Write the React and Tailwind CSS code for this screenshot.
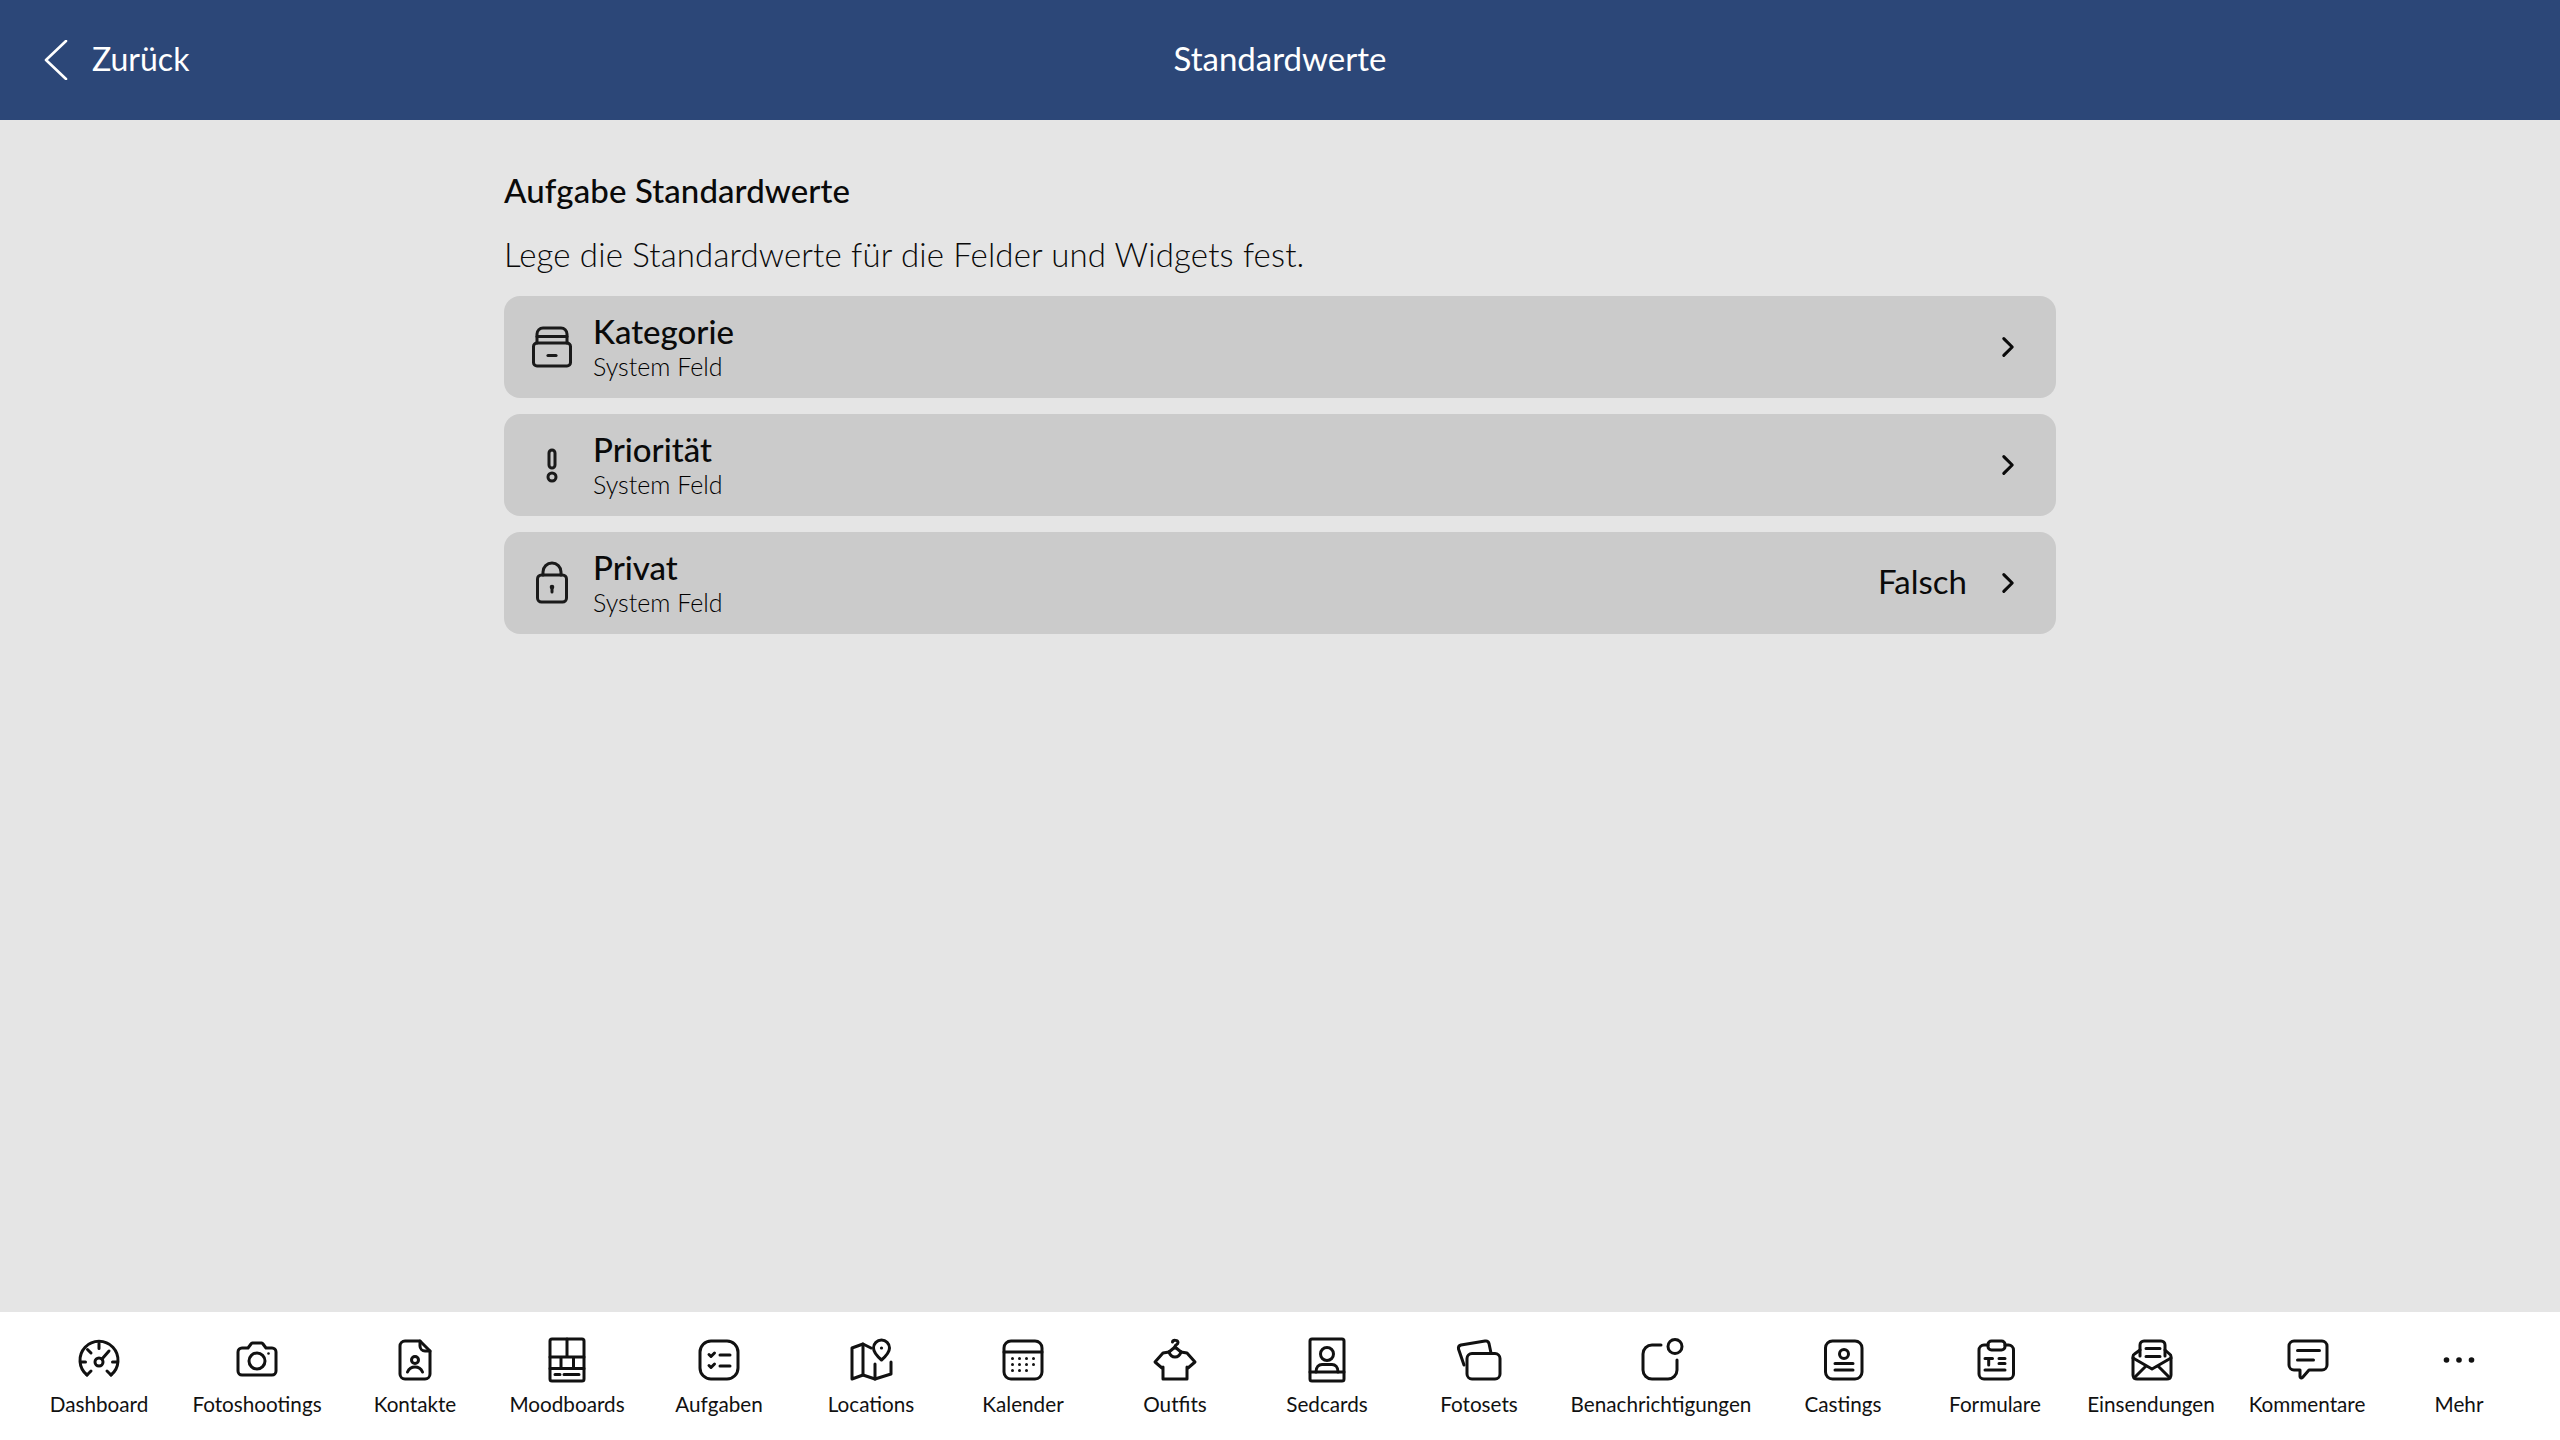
import { ChevronRight } from 'lucide-react';

const Icon = ({ children, className = 'w-12 h-12' }) => (
  <svg viewBox="0 0 48 48" fill="none" stroke="currentColor" strokeWidth="3" strokeLinecap="round" strokeLinejoin="round" className={className}>
    {children}
  </svg>
);

// --- ROW ICONS ---
const ArchiveIcon = () => (
  <Icon>
    <path d="M9 20v-9a6 6 0 0 1 6-6h18a6 6 0 0 1 6 6v9" />
    <path d="M9 13.500h30" />
    <rect x="5.500" y="20" width="37" height="23" rx="3.500" />
    <path d="M20 32.500h8" strokeWidth="3.200" />
  </Icon>
);

const ExclamationIcon = () => (
  <Icon>
    <rect x="21" y="9" width="6" height="18" rx="3" />
    <circle cx="24" cy="36" r="4" />
  </Icon>
);

const LockIcon = () => (
  <Icon>
    <rect x="9.500" y="16" width="29" height="27" rx="4" />
    <path d="M15 16v-3a9 9 0 0 1 18 0v3" />
    <circle cx="24" cy="28" r="2.300" fill="currentColor" stroke="none" />
    <path d="M24 29v4" />
  </Icon>
);

// --- TAB BAR ICONS ---
const tabIcons = {
  dashboard: (
    <>
      <path d="M12 39A19 19 0 1 1 36 39" />
      <path d="M12 39l4-4M36 39l-4-4M24 7.500v5M12.500 13.500l3.500 3.500M6 26h4.500M37.500 26H42" />
      <circle cx="24" cy="26" r="4" />
      <path d="M27 23l7-8" />
    </>
  ),
  camera: (
    <>
      <path d="M9 12h6l3-4a2 2 0 0 1 1.500-1h9a2 2 0 0 1 1.500 1l3 4h6a4 4 0 0 1 4 4v19a4 4 0 0 1-4 4H9a4 4 0 0 1-4-4V16a4 4 0 0 1 4-4z" />
      <circle cx="24" cy="25" r="8" />
      <circle cx="35.500" cy="17.500" r="1.300" fill="currentColor" stroke="none" />
    </>
  ),
  contact: (
    <>
      <path d="M29 5H14a5 5 0 0 0-5 5v28a5 5 0 0 0 5 5h20a5 5 0 0 0 5-5V15z" />
      <path d="M29 5v5a5 5 0 0 0 5 5h5" />
      <circle cx="24" cy="24" r="3.500" />
      <path d="M16.500 36c1.500-3.500 4-5 7.500-5s6 1.500 7.500 5" />
    </>
  ),
  moodboard: (
    <>
      <rect x="7" y="3" width="34" height="42" rx="2" />
      <path d="M24 3v18M7 21h34M7 32.500h34M18 21v11.500M30.500 21v11.500M12 38.500h5M21 38.500h15" />
    </>
  ),
  tasks: (
    <>
      <rect x="5" y="5" width="38" height="38" rx="11" />
      <path d="M14 18.500l2 2 3.500-3.500M14 29.500l2 2 3.500-3.500M25 19h10M25 30h10" />
    </>
  ),
  map: (
    <>
      <path d="M24 12l-8-4-11 4v31l11-4 12 4 16-5V26" />
      <path d="M16 8v31M28 28v15" />
      <path d="M34.500 4a8 8 0 0 0-8 8c0 5 8 12 8 12s8-7 8-12a8 8 0 0 0-8-8z" />
      <circle cx="34.500" cy="12" r="1.600" fill="currentColor" stroke="none" />
    </>
  ),
  calendar: (
    <>
      <rect x="5" y="5" width="38" height="38" rx="7" />
      <path d="M5 16h38" />
      <g fill="currentColor" stroke="none">
        {[13.500, 20.500, 27.500, 34.500].map((x) =>
          [22.500, 28.500, 34.500].map((y) => (x === 34.500 && y === 34.500 ? null : <circle key={`${x}-${y}`} cx={x} cy={y} r="1.500" />))
        )}
      </g>
    </>
  ),
  shirt: (
    <>
      <path d="M18 16l-6 1-8 9 7 6 1-1v12h24V31l1 1 7-6-8-9-6-1" />
      <path d="M18 16c1 3 3 5 6 5s5-2 6-5" />
      <path d="M24 11l-6 5M24 11l6 5" />
      <path d="M24 12v-1.500c0-2 3-1.500 3-4s-5-3-5.500-.5" />
    </>
  ),
  sedcard: (
    <>
      <rect x="7" y="3" width="34" height="42" rx="2" />
      <circle cx="24" cy="18" r="6.500" />
      <path d="M7 36h34" />
      <path d="M13 36c0-5 3-7.500 6-7.500h10c3 0 6 2.500 6 7.500" />
    </>
  ),
  photosets: (
    <>
      <path d="M9 29l-5.500-16a3.500 3.500 0 0 1 2.500-4l24-4a3.500 3.500 0 0 1 4 2.500l2 9.500" />
      <rect x="12" y="17.500" width="33" height="25.500" rx="5" />
    </>
  ),
  notification: (
    <>
      <path d="M24 9h-9a9 9 0 0 0-9 9v16a9 9 0 0 0 9 9h16a9 9 0 0 0 9-9v-10" />
      <circle cx="38" cy="10.500" r="7" />
    </>
  ),
  casting: (
    <>
      <rect x="6.500" y="5" width="36.500" height="38" rx="7" />
      <circle cx="25" cy="18" r="4.500" />
      <path d="M16 27.500h18M16 34h18" />
    </>
  ),
  form: (
    <>
      <path d="M17 9h-4a5 5 0 0 0-5 5v24a5 5 0 0 0 5 5h24.500a5 5 0 0 0 5-5V14a5 5 0 0 0-5-5H34" />
      <rect x="17" y="5" width="17" height="9" rx="3.500" />
      <path d="M14 22.500h7.500M17.700 22.500V29M28 22.500h6M28 27.500h6M14 34h20" />
    </>
  ),
  submission: (
    <>
      <path d="M13 20V9a4 4 0 0 1 4-4h17a4 4 0 0 1 4 4v11" />
      <path d="M19 12.500h14M19 20.500h14" />
      <path d="M13 14l-5.500 4a3 3 0 0 0-1.500 2.500V39a4 4 0 0 0 4 4h30a4 4 0 0 0 4-4V20.500a3 3 0 0 0-1.500-2.500L38 14" />
      <path d="M6 22l19 11 19-11M7 42l12-12M43 42L31 30" />
    </>
  ),
  comment: (
    <>
      <path d="M11 5h28a5 5 0 0 1 5 5v19a5 5 0 0 1-5 5H26l-6.500 7.500c-1 1-2.500.5-2.500-1V34h-6a5 5 0 0 1-5-5V10a5 5 0 0 1 5-5z" />
      <path d="M14.500 14.500h22M14.500 24h16" />
    </>
  ),
  more: (
    <g fill="currentColor" stroke="none">
      <circle cx="11.500" cy="24" r="2.800" />
      <circle cx="24" cy="24" r="2.800" />
      <circle cx="36.500" cy="24" r="2.800" />
    </g>
  ),
};

const tabs = [
  { label: 'Dashboard', icon: 'dashboard', width: 'w-[152px]' },
  { label: 'Fotoshootings', icon: 'camera', width: 'w-[164px]' },
  { label: 'Kontakte', icon: 'contact', width: 'w-[152px]' },
  { label: 'Moodboards', icon: 'moodboard', width: 'w-[152px]' },
  { label: 'Aufgaben', icon: 'tasks', width: 'w-[152px]' },
  { label: 'Locations', icon: 'map', width: 'w-[152px]' },
  { label: 'Kalender', icon: 'calendar', width: 'w-[152px]' },
  { label: 'Outfits', icon: 'shirt', width: 'w-[152px]' },
  { label: 'Sedcards', icon: 'sedcard', width: 'w-[152px]' },
  { label: 'Fotosets', icon: 'photosets', width: 'w-[152px]' },
  { label: 'Benachrichtigungen', icon: 'notification', width: 'w-[212px]' },
  { label: 'Castings', icon: 'casting', width: 'w-[152px]' },
  { label: 'Formulare', icon: 'form', width: 'w-[152px]' },
  { label: 'Einsendungen', icon: 'submission', width: 'w-[160px]' },
  { label: 'Kommentare', icon: 'comment', width: 'w-[152px]' },
  { label: 'Mehr', icon: 'more', width: 'w-[152px]' },
];

const rows = [
  { title: 'Kategorie', icon: <ArchiveIcon /> },
  { title: 'Priorität', icon: <ExclamationIcon /> },
  { title: 'Privat', icon: <LockIcon />, value: 'Falsch' },
];

const App = () => {
  return (
    <div className="h-screen flex flex-col bg-[#e5e5e5] text-[#0a0a0a] font-['Lato','Noto_Sans',sans-serif]">
      {/* Header */}
      <header className="h-[120px] shrink-0 bg-[#2c4778] text-white grid grid-cols-3 items-center">
        <div className="flex items-center pl-[44px] gap-[24px]">
          <svg viewBox="0 0 24 40" fill="none" stroke="currentColor" strokeWidth="2.600" strokeLinecap="round" strokeLinejoin="round" className="w-[24px] h-[40px]">
            <path d="M22 1L2 20l20 19" />
          </svg>
          <span className="text-[32px] pb-[2px]">Zurück</span>
        </div>
        <h1 className="text-center text-[33px] pb-[2px]">Standardwerte</h1>
      </header>

      {/* Content */}
      <main className="flex-1 w-[1552px] mx-auto pt-[50px]">
        <h2 className="text-[33px] leading-[40px] font-medium tracking-[0.1px] mb-[24px]">Aufgabe Standardwerte</h2>
        <p className="text-[33px] leading-[40px] font-light tracking-[0.15px] mb-[22px]">Lege die Standardwerte für die Felder und Widgets fest.</p>
        <div className="flex flex-col gap-[16px]">
          {rows.map((row) => (
            <div key={row.title} className="h-[102px] rounded-[16px] bg-[#cbcbcb] flex items-center pl-[24px] pr-[36px]">
              <div className="w-[48px] h-[48px] shrink-0 text-[#1a1a1a]">{row.icon}</div>
              <div className="ml-[17px] flex-1">
                <div className="text-[33px] leading-[35px] font-medium">{row.title}</div>
                <div className="text-[25px] leading-[30px] mt-[2px] font-light text-black">System Feld</div>
              </div>
              {row.value && <span className="text-[33px] mr-[29px] pb-[2px]">{row.value}</span>}
              <ChevronRight className="w-[24px] h-[32px]" strokeWidth={2.200} style={{ transform: 'scale(1.4)' }} />
            </div>
          ))}
        </div>
      </main>

      {/* Tab bar */}
      <nav className="h-[128px] shrink-0 bg-white flex pl-[23px]">
        {tabs.map((tab) => (
          <div key={tab.label} className={`${tab.width} flex flex-col items-center pt-[24px] text-[#111]`}>
            <Icon>{tabIcons[tab.icon]}</Icon>
            <span className="text-[20.7px] leading-[24px] mt-[8px] whitespace-nowrap">{tab.label}</span>
          </div>
        ))}
      </nav>
    </div>
  );
};

export default App;
